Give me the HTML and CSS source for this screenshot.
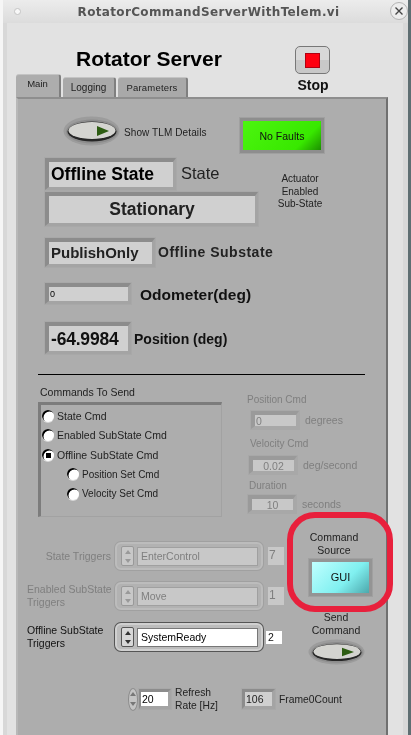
FILE: index.html
```html
<!DOCTYPE html>
<html lang="en">
<head>
  <meta charset="UTF-8" />
  <meta name="viewport" content="width=device-width, initial-scale=1.0"/>
  <title>RotatorCommandServerWithTelem.vi</title>
  <link rel="stylesheet" href="styles.css">
</head>
<body>
  <div class="window">
    <div class="titlebar">
      <span class="title-dot"></span>
      <span class="title-text">RotatorCommandServerWithTelem.vi</span>
      <span class="title-close">
        <svg width="10" height="10" viewBox="0 0 10 10"><path d="M1.5 1.5 L8.5 8.5 M8.5 1.5 L1.5 8.5" stroke="#444" stroke-width="1.4"/></svg>
      </span>
    </div>

    <div class="client">
      <div class="head">
        <div class="head-left">
          <h1>Rotator Server</h1>
          <div class="tabs">
            <div class="tab tab-active">Main</div>
            <div class="tab tab-logging">Logging</div>
            <div class="tab tab-params">Parameters</div>
          </div>
        </div>
        <div class="stop">
          <div class="stop-btn"><span class="stop-square"></span></div>
          <div class="stop-label">Stop</div>
        </div>
      </div>

      <div class="panel">
        <div class="top">
          <div class="top-left">
            <div class="row row-toggle">
              <svg class="toggle" width="57" height="30" viewBox="0 0 57 30">
                <ellipse cx="28.5" cy="15" rx="28" ry="14.5" fill="#9c9c9c"/>
                <ellipse cx="29" cy="15.5" rx="26" ry="12" fill="#8c8c8c"/>
                <ellipse cx="29" cy="15.5" rx="24.5" ry="10" fill="#262626"/>
                <ellipse cx="29" cy="14.5" rx="23.5" ry="8.5" fill="#d4d4d0"/>
                <path d="M34 10 L34 20 L46 15 Z" fill="#2d5c12"/>
              </svg>
              <span class="toggle-label">Show TLM Details</span>
            </div>
            <div class="row row-state">
              <div class="box box-state">Offline State</div>
              <span class="state-label">State</span>
            </div>
            <div class="box box-stationary">Stationary</div>
            <div class="row row-sub">
              <div class="box box-publish">PublishOnly</div>
              <span class="sub-label">Offline Substate</span>
            </div>
            <div class="row row-odo">
              <div class="box box-odo">0</div>
              <span class="odo-label">Odometer(deg)</span>
            </div>
            <div class="row row-pos">
              <div class="box box-pos">-64.9984</div>
              <span class="pos-label">Position (deg)</span>
            </div>
          </div>
          <div class="top-right">
            <div class="led led-green">No Faults</div>
            <div class="actuator">Actuator<br>Enabled<br>Sub-State</div>
          </div>
        </div>

        <div class="rule"></div>

        <div class="commands">
          <div class="cmd-list">
            <div class="cmd-title">Commands To Send</div>
            <div class="cmd-box">
              <div class="radio-row"><span class="radio"></span>State Cmd</div>
              <div class="radio-row"><span class="radio"></span>Enabled SubState Cmd</div>
              <div class="radio-row"><span class="radio radio-on"></span>Offline SubState Cmd</div>
              <div class="radio-row radio-sub"><span class="radio"></span>Position Set Cmd</div>
              <div class="radio-row radio-sub"><span class="radio"></span>Velocity Set Cmd</div>
            </div>
          </div>
          <div class="cmd-params">
            <div class="param-name">Position Cmd</div>
            <div class="param-row param-row-a"><div class="box box-param box-param-left">0</div><span>degrees</span></div>
            <div class="param-name param-name-b">Velocity Cmd</div>
            <div class="param-row param-row-b"><div class="box box-param">0.02</div><span>deg/second</span></div>
            <div class="param-name param-name-c">Duration</div>
            <div class="param-row param-row-c"><div class="box box-param">10</div><span>seconds</span></div>
          </div>
        </div>

        <div class="lower">
          <div class="triggers">
            <div class="trigger trigger-off trigger-first">
              <div class="trigger-name trigger-name-right">State Triggers</div>
              <div class="ring">
                <div class="spin"><span class="arrow-up"></span><span class="arrow-down"></span></div>
                <div class="ring-text">EnterControl</div>
              </div>
              <div class="ring-num">7</div>
            </div>
            <div class="trigger trigger-off">
              <div class="trigger-name">Enabled SubState Triggers</div>
              <div class="ring">
                <div class="spin"><span class="arrow-up"></span><span class="arrow-down"></span></div>
                <div class="ring-text">Move</div>
              </div>
              <div class="ring-num">1</div>
            </div>
            <div class="trigger trigger-on">
              <div class="trigger-name">Offline SubState Triggers</div>
              <div class="ring">
                <div class="spin"><span class="arrow-up"></span><span class="arrow-down"></span></div>
                <div class="ring-text">SystemReady</div>
              </div>
              <div class="ring-num">2</div>
            </div>
          </div>
          <div class="source">
            <div class="source-title">Command<br>Source</div>
            <div class="led led-cyan">GUI</div>
            <div class="send-title">Send<br>Command</div>
            <svg class="send-toggle" width="57" height="26" viewBox="0 0 57 30" preserveAspectRatio="none">
              <ellipse cx="28.5" cy="15" rx="28" ry="14.5" fill="#9c9c9c"/>
              <ellipse cx="29" cy="15.5" rx="26" ry="12" fill="#8c8c8c"/>
              <ellipse cx="29" cy="15.5" rx="24.5" ry="10" fill="#262626"/>
              <ellipse cx="29" cy="14.5" rx="23.5" ry="8.5" fill="#d4d4d0"/>
              <path d="M34 10 L34 20 L46 15 Z" fill="#2d5c12"/>
            </svg>
          </div>
        </div>

        <div class="bottom">
          <div class="incr"><span class="incr-up"></span><span class="incr-down"></span></div>
          <div class="box box-rate">20</div>
          <div class="rate-label">Refresh<br>Rate [Hz]</div>
          <div class="box box-frame">106</div>
          <div class="frame-label">Frame0Count</div>
        </div>

        <div class="callout"></div>
      </div>
    </div>
  </div>
</body>
</html>
```

FILE: styles.css
```css
* {
  box-sizing: border-box;
  font-family: "Liberation Sans", Arial, sans-serif;
}

html, body {
  margin: 0;
  padding: 0;
  height: 735px;
  overflow: hidden;
}

body {
  background-color: #f6f6f6;
  border-right: 3px solid #5f6e72;
  padding-left: 3px;
}

/* the reference is a slightly soft, rescaled capture */
.window {
  height: 735px;
  background-color: #d8d8d8;
  display: flex;
  flex-direction: column;
  filter: blur(0.3px);
}

/* title bar */
.titlebar {
  height: 23px;
  flex: none;
  display: flex;
  align-items: center;
  justify-content: center;
  position: relative;
  background: linear-gradient(#ececec, #dcdcdc);
}

.title-text {
  font-family: "DejaVu Sans", sans-serif;
  font-size: 12px;
  font-weight: bold;
  color: #555;
  letter-spacing: 0.35px;
  margin-left: 6px;
}

.title-dot {
  position: absolute;
  left: 11px;
  top: 8px;
  width: 7px;
  height: 7px;
  border-radius: 50%;
  background: #f8f8f8;
  border: 1px solid #c4c4c4;
}

.title-close {
  position: absolute;
  right: 0;
  top: 2px;
  width: 18px;
  height: 18px;
  border-radius: 50%;
  border: 1px solid #b4b4b4;
  background: #ececec;
  display: flex;
  align-items: center;
  justify-content: center;
}

.client {
  flex: 1;
  margin: 0 5px 0 4px;
  padding: 0 15px 0 9px;
  background-color: #e2e2e2;
  display: flex;
  flex-direction: column;
}

/* header with tabs */
.head {
  height: 74px;
  flex: none;
  display: flex;
}

.head-left {
  width: 278px;
  display: flex;
  flex-direction: column;
}

h1 {
  margin: 21px 0 0 60px;
  height: 30px;
  font-size: 21px;
  line-height: 30px;
  color: #000;
}

.tabs {
  display: flex;
  align-items: flex-end;
  height: 23px;
}

.tab {
  height: 20px;
  margin-right: 2px;
  background-color: #a9a9a9;
  border-radius: 3px 3px 0 0;
  border-top: 1px solid #c4c4c4;
  border-right: 2px solid #7f7f7f;
  font-size: 10px;
  line-height: 19px;
  text-align: center;
  color: #222;
}

.tab-active {
  width: 45px;
  height: 25px;
  line-height: 18px;
  background-color: #adadad;
  margin-bottom: -2px;
  position: relative;
  padding-bottom: 4px;
  font-size: 9.5px;
}

.tab-logging {
  width: 53px;
}

.tab-params {
  width: 70px;
  font-size: 9.5px;
  letter-spacing: 0.2px;
}

.stop {
  margin-left: 1px;
  width: 36px;
  padding-top: 23px;
}

.stop-btn {
  width: 35px;
  height: 28px;
  border: 1px solid #777;
  border-radius: 5px;
  background: linear-gradient(#d8d8d8 50%, #c8c8c8 50%);
  display: flex;
  align-items: center;
  justify-content: center;
}

.stop-square {
  width: 15px;
  height: 15px;
  background-color: #ff0010;
  border: 1px solid #b00010;
}

.stop-label {
  margin-top: 3px;
  font-size: 14px;
  font-weight: bold;
  text-align: center;
  line-height: 16px;
  color: #111;
}

/* main panel */
.panel {
  flex: 1;
  position: relative;
  background-color: #adadad;
  border-top: 2px solid #8e8e8e;
  border-right: 2px solid #707070;
  border-left: 2px solid #b8b8b8;
  min-height: 0;
}

.box {
  flex: none;
  background-color: #d0d0d0;
  border-style: solid;
  border-width: 4px 3px 3px 4px;
  border-color: #8c8c8c #a4a4a4 #a4a4a4 #8c8c8c;
  box-shadow: 0 0 0 1px #a8a8a8;
  color: #000;
  white-space: nowrap;
}

.top {
  display: flex;
  height: 275px;
}

.top-left {
  width: 224px;
  padding-left: 27px;
}

.row {
  display: flex;
  align-items: center;
  white-space: nowrap;
}

.row-toggle {
  height: 30px;
  margin: 17px 0 0 18px;
}

.toggle {
  flex: none;
}

.toggle-label {
  margin-left: 4px;
  font-size: 10px;
  letter-spacing: 0.1px;
  color: #222;
  position: relative;
  top: 1px;
}

.row-state {
  margin-top: 12px;
  height: 32px;
}

.box-state {
  width: 131px;
  height: 32px;
  font-size: 17.5px;
  font-weight: bold;
  line-height: 25px;
  padding-left: 2px;
}

.state-label {
  margin-left: 5px;
  font-size: 16.5px;
  color: #222;
  position: relative;
  top: -1px;
}

.box-stationary {
  width: 213px;
  height: 34px;
  margin-top: 2px;
  font-size: 17.5px;
  font-weight: bold;
  line-height: 26px;
  text-align: center;
  color: #222;
}

.row-sub {
  margin-top: 12px;
  height: 29px;
}

.box-publish {
  width: 110px;
  height: 29px;
  font-size: 15px;
  font-weight: bold;
  line-height: 22px;
  padding-left: 2px;
  color: #222;
}

.sub-label {
  margin-left: 3px;
  font-size: 14px;
  font-weight: bold;
  letter-spacing: 0.5px;
  color: #222;
  position: relative;
  top: -1px;
}

.row-odo {
  margin-top: 16px;
  height: 21px;
}

.box-odo {
  width: 86px;
  height: 21px;
  font-size: 9px;
  line-height: 14px;
  padding-left: 1px;
}

.odo-label {
  margin-left: 9px;
  font-size: 15.5px;
  font-weight: bold;
  color: #111;
  position: relative;
  top: 1px;
}

.row-pos {
  margin-top: 18px;
  height: 32px;
}

.box-pos {
  width: 86px;
  height: 32px;
  font-size: 17.5px;
  font-weight: bold;
  line-height: 27px;
  padding-left: 2px;
  letter-spacing: -0.2px;
  color: #111;
}

.pos-label {
  margin-left: 3px;
  font-size: 14px;
  font-weight: bold;
  color: #111;
  position: relative;
  top: 1px;
}

.led {
  border: 3px solid #8e8e8e;
  box-shadow: 0 0 0 1px #a0a0a0;
  text-align: center;
  color: #111;
}

.led-green {
  width: 84px;
  height: 35px;
  margin: 19px 0 0 -2px;
  font-size: 10.5px;
  line-height: 31px;
  background: linear-gradient(135deg, #4cf50f, #38e800 75%, #1c9000);
}

.actuator {
  margin: 20px 0 0 -2px;
  width: 120px;
  font-size: 10px;
  line-height: 12.5px;
  text-align: center;
  color: #222;
}

.rule {
  height: 1px;
  margin: 0 21px 0 20px;
  background-color: #000;
}

/* radio list */
.commands {
  display: flex;
  height: 143px;
}

.cmd-list {
  width: 226px;
  padding-left: 20px;
}

.cmd-title {
  margin: 11px 0 0 2px;
  font-size: 10.5px;
  line-height: 13px;
  color: #222;
}

.cmd-box {
  width: 184px;
  height: 115px;
  margin-top: 3px;
  padding: 1px 0 0 1px;
  border-style: solid;
  border-width: 3px 1px 1px 3px;
  border-color: #7c7c7c #a2a2a2 #a2a2a2 #7c7c7c;
}

.radio-row {
  display: flex;
  align-items: center;
  height: 19.5px;
  font-size: 10.5px;
  color: #222;
}

.radio-sub {
  padding-left: 25px;
  font-size: 10px;
}

.radio {
  position: relative;
  flex: none;
  width: 12px;
  height: 12px;
  margin-right: 3px;
  border-radius: 50%;
  background-color: #fff;
  box-shadow: inset 1.5px 1.5px 0 #000, 0 1px 0 #d8d8d8;
}

.radio-on::after {
  content: "";
  position: absolute;
  left: 4px;
  top: 4px;
  width: 5px;
  height: 5px;
  background-color: #000;
}

/* disabled numeric controls */
.cmd-params {
  padding-left: 3px;
  color: #7f7f7f;
  font-size: 10px;
}

.param-name {
  margin-top: 19px;
  line-height: 12px;
  font-size: 10px;
}

.param-name-b {
  margin-top: 9px;
  padding-left: 3px;
}

.param-name-c {
  margin-top: 6px;
  padding-left: 2px;
}

.param-row {
  display: flex;
  align-items: center;
  margin-top: 5px;
  gap: 6px;
  font-size: 10.5px;
}

.param-row-b {
  margin-top: 6px;
}

.param-row-c {
  margin-top: 3px;
}

.box-param {
  width: 48px;
  height: 18px;
  margin-left: 2px;
  border-color: #9a9a9a #a8a8a8 #a8a8a8 #9a9a9a;
  background-color: #c8c8c8;
  line-height: 13px;
  font-size: 10.5px;
  text-align: center;
  color: #7f7f7f;
}

.box-param-left {
  margin-left: 4px;
  text-align: left;
  padding-left: 1px;
}

.param-row-c .box-param {
  margin-left: 1px;
}

/* triggers */
.lower {
  display: flex;
  height: 153px;
}

.triggers {
  width: 268px;
  padding-top: 24px;
}

.trigger {
  display: flex;
  align-items: center;
  height: 28px;
  margin-bottom: 13px;
}

.trigger-first {
  margin-bottom: 12px;
}

.trigger-name {
  width: 97px;
  padding-left: 9px;
  font-size: 10.5px;
  line-height: 13px;
  flex: none;
}

.trigger-name-right {
  text-align: right;
  padding-right: 4px;
}

.trigger-off {
  color: #7f7f7f;
}

.trigger-on {
  color: #111;
}

.ring {
  flex: none;
  width: 148px;
  height: 28px;
  display: flex;
  align-items: center;
  gap: 3px;
  padding-left: 4px;
  border: 2px solid #bcbcbc;
  border-radius: 6px;
  box-shadow: 0 0 0 1px #a0a0a0;
  background-color: #b2b2b2;
}

.trigger-on .ring {
  border-color: #d0d0d0;
  box-shadow: 0 0 0 1px #555;
  background-color: #bcbcbc;
}

.spin {
  width: 13px;
  height: 20px;
  flex: none;
  display: flex;
  flex-direction: column;
  align-items: center;
  justify-content: space-around;
  background-color: #c8c8c8;
  border: 1px solid #999;
  border-radius: 2px;
}

.trigger-on .spin {
  border-color: #555;
  background-color: #d8d8d8;
}

.arrow-up, .arrow-down {
  width: 0;
  height: 0;
  border-left: 3px solid transparent;
  border-right: 3px solid transparent;
}

.arrow-up {
  border-bottom: 4px solid #999;
}

.arrow-down {
  border-top: 4px solid #999;
}

.trigger-on .arrow-up {
  border-bottom-color: #333;
}

.trigger-on .arrow-down {
  border-top-color: #333;
}

.ring-text {
  width: 121px;
  height: 19px;
  padding-left: 3px;
  font-size: 10.5px;
  line-height: 17px;
  background-color: #c8c8c8;
  border: 1px solid #a0a0a0;
}

.trigger-on .ring-text {
  background-color: #fff;
  border-color: #777;
  color: #000;
}

.ring-num {
  width: 16px;
  height: 17px;
  margin-left: 5px;
  padding-left: 1px;
  font-size: 11px;
  line-height: 17px;
  background-color: #c8c8c8;
  flex: none;
}

.trigger-off .ring-num {
  height: 18px;
  font-size: 12px;
}

.trigger-on .ring-num {
  height: 13px;
  margin-left: 3px;
  line-height: 13px;
  background-color: #fff;
  padding-left: 2px;
  font-size: 10.5px;
}

/* command source */
.source {
  width: 100px;
  text-align: center;
  color: #222;
  font-size: 10.5px;
  line-height: 12.5px;
  padding-top: 13px;
}

.source-title {
  width: 84px;
  margin-left: 6px;
}

.led-cyan {
  width: 63px;
  height: 37px;
  margin: 3px 0 0 23px;
  font-size: 11px;
  line-height: 31px;
  border-color: #949494;
  background: linear-gradient(135deg, #c0ffff, #80f0f0 60%, #4ca8ac);
}

.send-title {
  width: 84px;
  margin: 15px 0 0 8px;
}

.send-toggle {
  display: block;
  margin: 3px 0 0 22px;
}

/* bottom row */
.bottom {
  display: flex;
  align-items: center;
  height: 24px;
  margin-top: 16px;
  padding-left: 110px;
}

.incr {
  width: 10px;
  height: 23px;
  flex: none;
  display: flex;
  flex-direction: column;
  align-items: center;
  justify-content: space-around;
  background-color: #c4c4c4;
  border: 1px solid #8c8c8c;
  border-radius: 50%;
}

.incr-up, .incr-down {
  width: 0;
  height: 0;
  border-left: 3px solid transparent;
  border-right: 3px solid transparent;
}

.incr-up {
  border-bottom: 4px solid #777;
}

.incr-down {
  border-top: 4px solid #777;
}

.box-rate {
  width: 32px;
  height: 20px;
  margin-left: 1px;
  background-color: #fff;
  font-size: 10.5px;
  line-height: 14px;
  padding-left: 1px;
  border-width: 3px 3px 3px 2px;
}

.rate-label {
  width: 67px;
  margin-left: 4px;
  font-size: 10.3px;
  line-height: 13px;
  color: #222;
}

.box-frame {
  width: 33px;
  height: 20px;
  font-size: 10.5px;
  line-height: 14px;
  padding-left: 1px;
  border-width: 3px;
  color: #222;
}

.frame-label {
  margin-left: 4px;
  font-size: 10.3px;
  color: #222;
}

/* red hand-drawn mark on top of the screenshot */
.callout {
  position: absolute;
  left: 269px;
  top: 413px;
  width: 106px;
  height: 100px;
  border: 6px solid #e8203c;
  border-radius: 28px;
  pointer-events: none;
}
```
